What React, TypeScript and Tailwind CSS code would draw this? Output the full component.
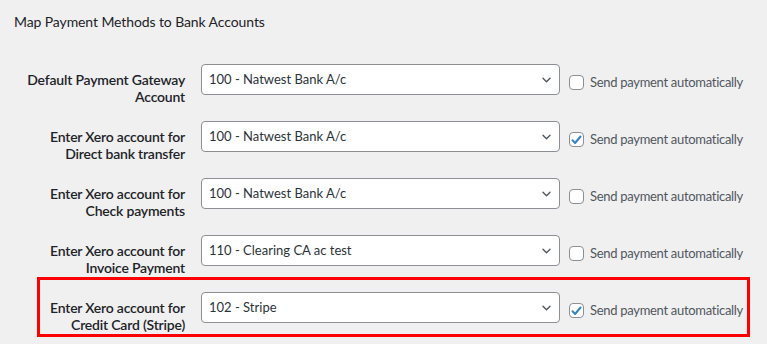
import { useState } from "react";

type Row = {
  label: [string, string];
  account: string;
  auto: boolean;
  highlight?: boolean;
};

const ROWS: Row[] = [
  { label: ["Default Payment Gateway", "Account"], account: "100 - Natwest Bank A/c", auto: false },
  { label: ["Enter Xero account for", "Direct bank transfer"], account: "100 - Natwest Bank A/c", auto: true },
  { label: ["Enter Xero account for", "Check payments"], account: "100 - Natwest Bank A/c", auto: false },
  { label: ["Enter Xero account for", "Invoice Payment"], account: "110 - Clearing CA ac test", auto: false },
  { label: ["Enter Xero account for", "Credit Card (Stripe)"], account: "102 - Stripe", auto: true, highlight: true },
];

function Chevron() {
  return (
    <svg width="9" height="6" viewBox="0 0 9 6" fill="none" className="shrink-0">
      <path d="M1 1.2l3.5 3.5L8 1.2" stroke="#50575e" strokeWidth="1.4" strokeLinecap="round" strokeLinejoin="round" />
    </svg>
  );
}

function Checkbox({ checked, onToggle }: { checked: boolean; onToggle: () => void }) {
  return (
    <button
      type="button"
      onClick={onToggle}
      className="w-[15px] h-[15px] rounded-[4px] border border-[#8c8f94] bg-white flex items-center justify-center shrink-0"
    >
      {checked && (
        <svg width="11" height="10" viewBox="0 0 11 10" fill="none">
          <path d="M1.5 5.2l2.6 2.8L9.5 1.5" stroke="#3582c4" strokeWidth="2" strokeLinecap="round" strokeLinejoin="round" />
        </svg>
      )}
    </button>
  );
}

function MappingRow({ row }: { row: Row }) {
  const [auto, setAuto] = useState(row.auto);
  return (
    <div className="relative flex items-start h-[57px]">
      {row.highlight && (
        <div className="absolute left-[23px] top-[-15px] w-[713px] h-[60px] border-[3px] border-[#ff0000] pointer-events-none" />
      )}
      <div className="w-[171px] pt-[7px] text-right text-[14px] leading-[17px] font-semibold tracking-[-0.2px] text-[#1d2327] whitespace-nowrap">
        <div>{row.label[0]}</div>
        <div>{row.label[1]}</div>
      </div>
      <div className="ml-[16px] w-[359px] h-[31px] rounded-[4px] border border-[#8c8f94] bg-white flex items-center justify-between pl-[7px] pr-[8px]">
        <span className="text-[13px] text-[#2c3338]">{row.account}</span>
        <Chevron />
      </div>
      <label className="ml-[9px] mt-[3px] h-[31px] flex items-center gap-[6px] text-[13px] tracking-[-0.3px] text-[#50575e] cursor-pointer whitespace-nowrap">
        <Checkbox checked={auto} onToggle={() => setAuto(!auto)} />
        <span>Send payment automatically</span>
      </label>
    </div>
  );
}

export default function App() {
  return (
    <div
      className="w-[767px] h-[344px] bg-[#f0f0f1] overflow-hidden px-[14px] pt-[12px]"
      style={{ fontFamily: 'Lato, "Open Sans", sans-serif' }}
    >
      <h2 className="text-[14px] leading-[20px] font-normal tracking-[-0.1px] text-[#1d2327]">
        Map Payment Methods to Bank Accounts
      </h2>
      <div className="mt-[32px]">
        {ROWS.map((row) => (
          <MappingRow key={row.label.join(" ")} row={row} />
        ))}
      </div>
    </div>
  );
}
